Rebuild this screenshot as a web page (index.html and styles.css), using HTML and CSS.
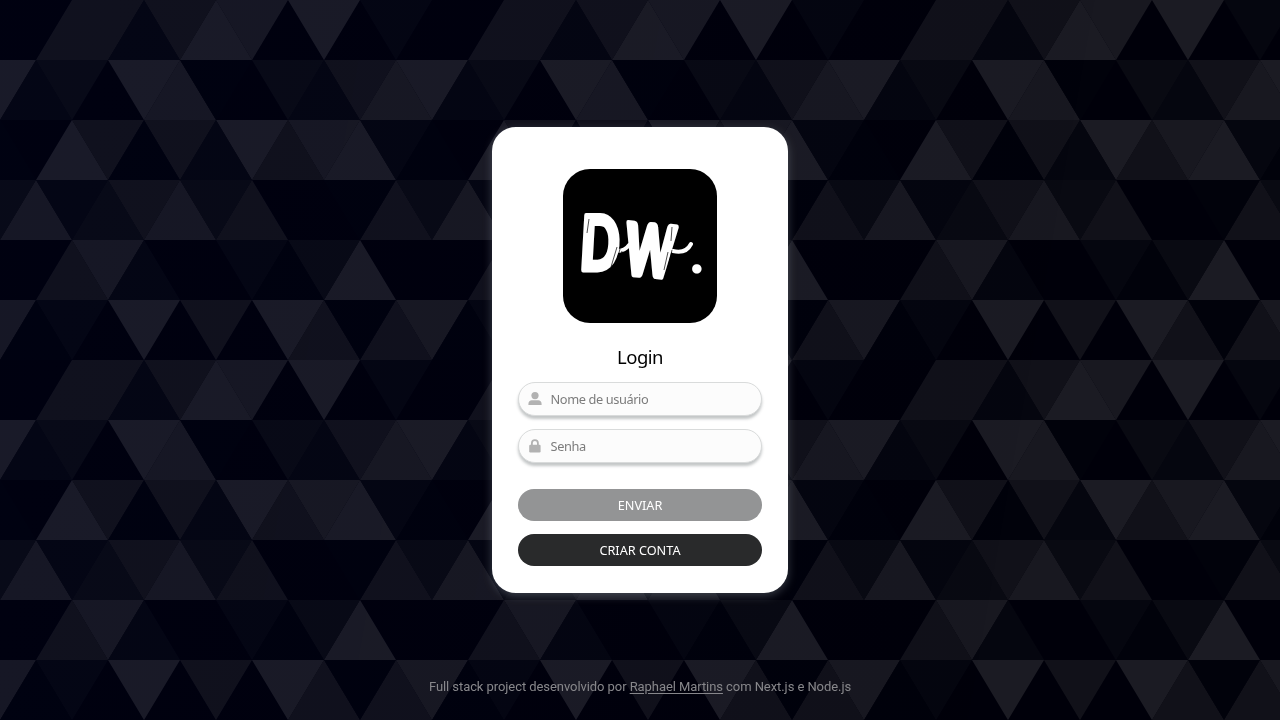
FILE: index.html
```html
<!DOCTYPE html>
<html lang="pt-BR">
<head>
<meta charset="utf-8">
<title>Login</title>
<link rel="stylesheet" href="styles.css">
</head>
<body>
<svg class="backdrop" aria-hidden="true">
  <defs>
    <pattern id="triangles" width="432" height="360" patternUnits="userSpaceOnUse">
      <rect class="t-ink" width="432" height="360"/>
      <path class="t-light" d="M216 0l36 60h-72zM288 0h72l-36 60zM-36 60h72l-36 60zM396 60h72l-36 60zM108 60h72l-36 60zM72 120l36 60h-72zM216 120h72l-36 60zM360 120l36 60h-72zM360 240l36 60h-72zM108 300h72l-36 60zM252 300h72l-36 60z"/>
      <path class="t-soft" d="M216 0h72l-36 60zM180 60l36 60h-72zM396 60l36 60h-72zM288 120h72l-36 60zM36 180l36 60h-72zM180 180l36 60h-72zM72 240h72l-36 60zM-36 300h72l-36 60zM396 300h72l-36 60z"/>
      <path class="t-mid" d="M72 0l36 60h-72zM72 0h72l-36 60zM144 0h72l-36 60zM324 60h72l-36 60zM72 120h72l-36 60zM144 120h72l-36 60zM288 120l36 60h-72zM108 180h72l-36 60zM252 180l36 60h-72zM396 180l36 60h-72zM72 240l36 60h-72zM180 300h72l-36 60zM324 300l36 60h-72zM396 300l36 60h-72z"/>
      <path class="t-dim" d="M36 60h72l-36 60zM252 60h72l-36 60zM-36 180h72l-36 60zM396 180h72l-36 60zM108 180l36 60h-72zM180 180h72l-36 60zM288 240h72l-36 60z"/>
      <path class="t-dark" d="M144 0l36 60h-72zM360 0h72l-36 60zM36 60l36 60h-72zM324 60l36 60h-72zM216 120l36 60h-72zM360 120h72l-36 60zM36 180h72l-36 60zM144 240l36 60h-72zM216 240h72l-36 60zM36 300h72l-36 60z"/>
      <path class="t-deep" d="M180 60h72l-36 60zM0 120l36 60h-72zM432 120l36 60h-72zM144 120l36 60h-72zM324 180h72l-36 60zM288 240l36 60h-72zM36 300l36 60h-72zM324 300h72l-36 60z"/>
    </pattern>
  </defs>
  <rect width="100%" height="100%" fill="url(#triangles)"/>
</svg>
<div class="page">
  <main class="card">
    <svg class="logo" viewBox="0 0 154 154" role="img" aria-label="Dw.">
      <rect width="154" height="154" rx="27"/>
      <g class="logo-text">
        <text class="logo-d" transform="translate(18 101) skewX(2) scale(.76 1.03)">D</text>
        <text class="logo-w" transform="translate(62 105) rotate(5) skewX(4) scale(1.1 1.62)">w</text>
        <text class="logo-dot" x="130" y="103">.</text>
      </g>
      <path class="swash" d="M54 82q8 0 12-6M110 82q13 3 18-7"/>
      <path class="streak" d="M24 64l2-14M48 98l6-20M52 98l5-18M56 94l3-12M101 101l4-18M105 98l4-17M108 72l1-14"/>
    </svg>
    <h1 class="title">Login</h1>
    <form class="form">
      <label class="field">
        <svg class="icon" viewBox="0 0 14 14"><circle cx="7" cy="3.6" r="3.6"/><path d="M.4 13.1v-1.4c0-2 1.5-3.5 3.5-3.5h6.2c2 0 3.5 1.5 3.5 3.5v1.4z"/></svg>
        <input class="input" type="text" placeholder="Nome de usuário">
      </label>
      <label class="field">
        <svg class="icon" viewBox="0 0 14 14"><rect x="1.2" y="5.8" width="11.4" height="7.6" rx="1.2"/><path class="shackle" d="M3.9 6.5v-2.4a3 3 0 0 1 6 0v2.4"/></svg>
        <input class="input" type="password" placeholder="Senha">
      </label>
      <button class="button submit" type="button">ENVIAR</button>
      <button class="button create" type="button">CRIAR CONTA</button>
    </form>
  </main>
  <footer class="footer">Full stack project desenvolvido por <a class="author">Raphael Martins</a> com Next.js e Node.js</footer>
</div>
</body>
</html>
```
FILE: styles.css
```css
* { box-sizing: border-box; }
body { margin: 0; background: #000007; font-family: "Noto Sans", sans-serif; }
.backdrop { position: fixed; inset: 0; width: 100%; height: 100%; z-index: -1; }
.t-ink { fill: #00000a; }
.t-light { fill: #1b1b23; }
.t-soft { fill: #181820; }
.t-mid { fill: #111119; }
.t-dim { fill: #090a12; }
.t-dark { fill: #05060f; }
.t-deep { fill: #01020b; }
.page {
  height: 720px;
  display: flex;
  flex-direction: column;
  align-items: center;
  padding-top: 127px;
  background: linear-gradient(100deg, rgba(0, 20, 140, .055), rgba(0, 10, 128, .03) 45%, rgba(0, 0, 128, 0) 80%);
}
.card {
  width: 296px;
  height: 465.5px;
  padding: 42px 26px 0;
  display: flex;
  flex-direction: column;
  align-items: center;
  border-radius: 24px;
  background: #fff;
  box-shadow: 0 3px 10px rgba(185, 200, 210, .28);
}
.logo { display: block; width: 154px; height: 154px; }
.logo-text { fill: #fff; stroke: #fff; stroke-linejoin: round; font-family: Lato, sans-serif; font-style: italic; font-weight: 700; }
.logo-d { font-size: 73px; stroke-width: 5px; }
.logo-w { font-size: 62px; stroke-width: 3px; }
.logo-dot { font-size: 42px; stroke-width: 3px; }
.swash { fill: none; stroke: #fff; stroke-width: 4; stroke-linecap: round; }
.streak { fill: none; stroke: #000; stroke-width: .7; }
.title { margin: 20px 0 0; height: 39px; font-size: 18.5px; line-height: 28px; letter-spacing: -.5px; font-weight: 400; color: #000; }
.form { width: 244px; display: flex; flex-direction: column; }
.field {
  height: 34px;
  margin-bottom: 13px;
  padding-left: 8.5px;
  display: flex;
  align-items: center;
  gap: 9px;
  border: 1px solid #d9dbdb;
  border-radius: 17px;
  background: #fcfcfc;
  box-shadow: 0 3px 3px rgba(40, 50, 55, .28);
}
.icon { width: 14px; height: 14px; flex: none; fill: #b2b2b2; }
.shackle { fill: none; stroke: #b2b2b2; stroke-width: 1.8; }
.input { width: 190px; padding: 0; border: 0; outline: 0; background: none; font: 12.8px "Noto Sans", sans-serif; letter-spacing: -.4px; }
.input::placeholder { color: #7c7c7c; opacity: 1; }
.button {
  height: 32.5px;
  padding: 0;
  border: 0;
  border-radius: 16px;
  color: #fff;
  font: 12.7px "Noto Sans", sans-serif;
}
.submit { margin: 12.5px 0; background: #939495; }
.create { background: #292a2b; }
.footer { margin-top: 84px; font: 13px/20px Roboto, sans-serif; letter-spacing: -.07px; color: #87878b; white-space: nowrap; }
.author { text-decoration: underline; text-underline-offset: 2px; }
```
